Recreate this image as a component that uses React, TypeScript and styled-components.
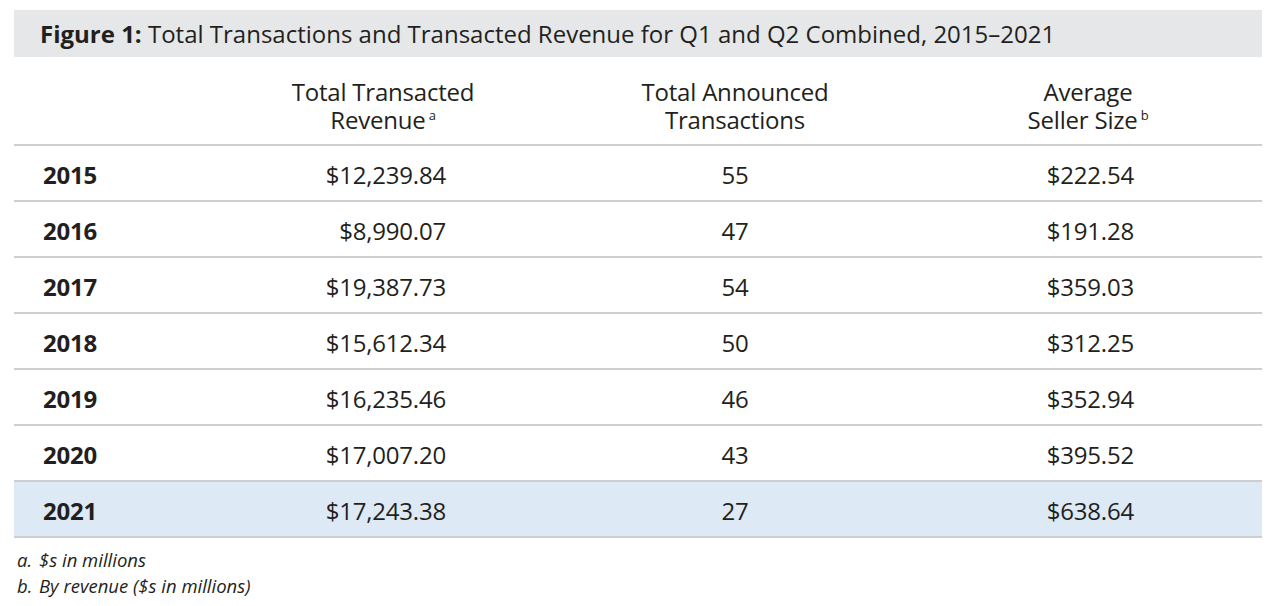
import React from "react";
import styled, { createGlobalStyle } from "styled-components";

const GlobalStyle = createGlobalStyle`
  html, body {
    margin: 0;
    padding: 0;
    background: #ffffff;
  }
  body {
    font-family: "Open Sans", "Noto Sans", "Liberation Sans", sans-serif;
    color: #231f20;
  }
`;

const Page = styled.div`
  width: 1248px;
  padding: 10px 0 0 14px;
`;

const TitleBar = styled.div`
  height: 47px;
  background: #e6e7e8;
  display: flex;
  align-items: center;
  padding-left: 26px;
  font-size: 24px;
  color: #231f20;
  b {
    font-weight: 700;
  }
`;

const Grid = styled.div`
  display: grid;
  grid-template-columns: 196px 346px 358px 348px;
`;

const HeadCell = styled.div`
  height: 89px;
  box-sizing: border-box;
  padding-top: 21px;
  border-bottom: 2px solid #cdcecf;
  text-align: center;
  font-size: 24px;
  line-height: 28px;
  letter-spacing: -0.2px;
  sup {
    font-size: 13px;
    line-height: 0;
    vertical-align: 0;
    position: relative;
    top: -9px;
    margin-left: 3px;
  }
`;

const Cell = styled.div<{ $align?: "left" | "right" | "center"; $pr?: number; $hl?: boolean }>`
  height: 56px;
  box-sizing: border-box;
  border-bottom: 2px solid #cdcecf;
  background: ${({ $hl }) => ($hl ? "#dde9f5" : "transparent")};
  display: flex;
  align-items: center;
  justify-content: ${({ $align }) =>
    $align === "right" ? "flex-end" : $align === "center" ? "center" : "flex-start"};
  padding-right: ${({ $pr }) => $pr ?? 0}px;
  padding-left: ${({ $align }) => ($align === "left" ? 29 : 0)}px;
  padding-top: 2px;
  font-size: 24px;
  letter-spacing: -0.2px;
`;

const Year = styled.span`
  font-weight: 700;
`;

const Notes = styled.div`
  padding: 9px 0 0 3px;
  font-style: italic;
  font-size: 18.5px;
  line-height: 26px;
`;

const NoteLabel = styled.span`
  display: inline-block;
  width: 22px;
`;

const rows = [
  ["2015", "$12,239.84", "55", "$222.54"],
  ["2016", "$8,990.07", "47", "$191.28"],
  ["2017", "$19,387.73", "54", "$359.03"],
  ["2018", "$15,612.34", "50", "$312.25"],
  ["2019", "$16,235.46", "46", "$352.94"],
  ["2020", "$17,007.20", "43", "$395.52"],
  ["2021", "$17,243.38", "27", "$638.64"],
];

export default function App() {
  return (
    <>
      <GlobalStyle />
      <Page>
        <TitleBar>
          <span>
            <b>Figure 1:</b> Total Transactions and Transacted Revenue for Q1 and Q2 Combined, 2015–2021
          </span>
        </TitleBar>
        <Grid>
          <HeadCell />
          <HeadCell>
            Total Transacted
            <br />
            Revenue<sup>a</sup>
          </HeadCell>
          <HeadCell>
            Total Announced
            <br />
            Transactions
          </HeadCell>
          <HeadCell>
            Average
            <br />
            Seller Size<sup>b</sup>
          </HeadCell>
          {rows.map(([year, rev, tx, avg], i) => {
            const hl = i === rows.length - 1;
            return (
              <React.Fragment key={year}>
                <Cell $align="left" $hl={hl}>
                  <Year>{year}</Year>
                </Cell>
                <Cell $align="right" $pr={110} $hl={hl}>
                  {rev}
                </Cell>
                <Cell $align="center" $hl={hl}>
                  {tx}
                </Cell>
                <Cell $align="right" $pr={128} $hl={hl}>
                  {avg}
                </Cell>
              </React.Fragment>
            );
          })}
        </Grid>
        <Notes>
          <div>
            <NoteLabel>a.</NoteLabel>$s in millions
          </div>
          <div>
            <NoteLabel>b.</NoteLabel>By revenue ($s in millions)
          </div>
        </Notes>
      </Page>
    </>
  );
}
